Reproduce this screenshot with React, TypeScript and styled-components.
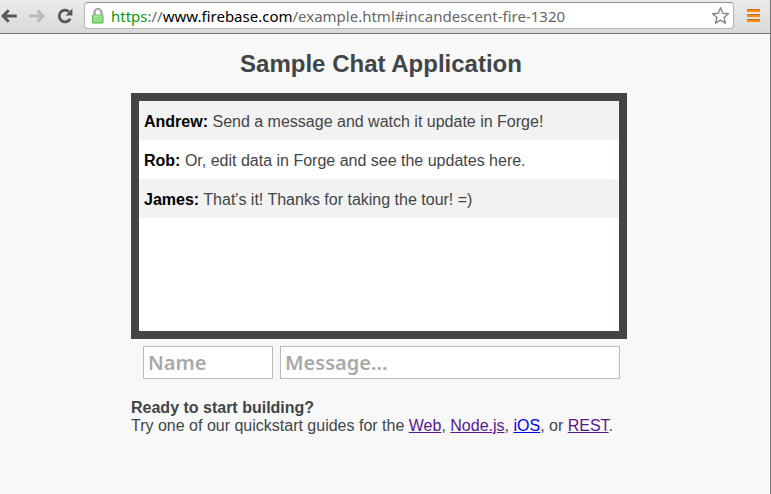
import React from "react";
import styled, { createGlobalStyle } from "styled-components";

const GlobalStyle = createGlobalStyle`
  * { box-sizing: border-box; }
  body {
    margin: 0;
    background: #f8f8f8;
    color: #424547;
    font: 16px/18px "Liberation Sans", Arial, sans-serif;
  }
`;

const Window = styled.div`
  min-height: 100vh;
  border-right: 1px solid #777;
`;

const Toolbar = styled.header`
  display: flex;
  align-items: center;
  height: 34px;
  padding: 0 8px 2px 0;
  border-bottom: 1px solid #777475;
  background: linear-gradient(#ebebeb, #dad9da);
`;

const Navigation = styled.nav`
  display: flex;
  flex: none;
  padding-right: 10px;
`;

const ToolButton = styled.button<{ $width: number }>`
  display: flex;
  flex: none;
  align-items: center;
  justify-content: center;
  width: ${(p) => p.$width}px;
  height: 28px;
  padding: 0;
  border: 0;
  background: none;
`;

const AddressBar = styled.div`
  display: flex;
  flex: 1;
  align-items: center;
  min-width: 0;
  height: 27px;
  padding: 0 3px 0 6px;
  margin-right: 10px;
  border: 1px solid #b4b4b4;
  border-top-color: #8e8e8e;
  border-radius: 4px;
  background: #fff;
`;

const Address = styled.div`
  flex: 1;
  min-width: 0;
  margin-left: 6px;
  overflow: hidden;
  white-space: nowrap;
  color: #666;
  font: 15px/24px "Noto Sans", sans-serif;
`;

const Secure = styled.span`
  color: #0a9a0a;
`;

const Host = styled.span`
  color: #000;
`;

const Page = styled.div`
  padding-right: 8px;
`;

const Main = styled.main`
  max-width: 500px;
  margin: 0 auto;
  padding: 16px 0;
`;

const Title = styled.h1`
  margin: 0 0 15px;
  text-align: center;
  font-size: 24px;
  line-height: 28px;
`;

const Messages = styled.ul`
  height: 246px;
  margin: 0 4px 7px 0;
  padding: 0;
  border: 8px solid #424547;
  background: #fff;
  overflow: auto;
  list-style: none;
`;

const Message = styled.li`
  padding: 12px 5px 9px;
  &:nth-child(odd) {
    background: #f2f2f2;
  }
`;

const Author = styled.strong`
  color: #000;
`;

const Composer = styled.form`
  display: flex;
  gap: 7px;
  margin: 0 11px 20px 12px;
`;

const Field = styled.input<{ $width?: number }>`
  flex: ${(p) => (p.$width ? `0 0 ${p.$width}px` : "1")};
  min-width: 0;
  height: 33px;
  padding: 0 4px;
  border: 1px solid #bbb;
  border-radius: 0;
  background: #fff;
  color: #424547;
  font: 600 20px/28px "Noto Sans", sans-serif;
  &::placeholder {
    color: #a9a9a9;
    opacity: 1;
  }
`;

const Guides = styled.p`
  margin: 0;
`;

const GuideLink = styled.a<{ $visited?: boolean }>`
  color: ${(p) => (p.$visited ? "#551a8b" : "#0000ee")};
`;

const messages = [
  { name: "Andrew", text: "Send a message and watch it update in Forge!" },
  { name: "Rob", text: "Or, edit data in Forge and see the updates here." },
  { name: "James", text: "That's it! Thanks for taking the tour! =)" },
];

const ArrowIcon = ({ color, flip }: { color: string; flip?: boolean }) => (
  <svg width="18" height="16" viewBox="0 0 18 16" fill="none" stroke={color} strokeWidth="2.8">
    <path d={flip ? "M1.2 8H14.5M9.3 2.2L15 8L9.3 13.8" : "M16.8 8H3.5M8.7 2.2L3 8L8.7 13.8"} />
  </svg>
);

const ReloadIcon = () => (
  <svg width="18" height="18" viewBox="0 0 18 18">
    <path d="M14.2 11.6A5.8 5.8 0 1 1 12.9 4.7" fill="none" stroke="#565656" strokeWidth="2.8" />
    <path d="M16.4 1.6V8.4H9.6Z" fill="#565656" />
  </svg>
);

const LockIcon = () => (
  <svg width="14" height="18" viewBox="0 0 14 18">
    <path d="M3.5 9V5.5A3.5 3.5 0 0 1 10.5 5.5V9" fill="none" stroke="#8b8b8b" strokeWidth="2.2" />
    <path d="M3.5 9V5.5A3.5 3.5 0 0 1 10.5 5.5V9" fill="none" stroke="#d4d4d4" strokeWidth="0.7" />
    <rect x="1.5" y="8" width="10.5" height="8" rx="0.5" fill="#91df85" stroke="#56ae49" />
    <path d="M2 9H11.5" stroke="#b9efb0" />
  </svg>
);

const StarIcon = () => (
  <svg width="20" height="20" viewBox="0 0 20 20">
    <path
      d="M10.5 1.8L12.8 7.2L18.4 7.7L14.1 11.5L15.5 17.2L10.5 14.2L5.5 17.2L6.9 11.5L2.6 7.7L8.2 7.2Z"
      fill="#fff"
      stroke="#858585"
      strokeWidth="1.4"
      strokeLinejoin="round"
    />
  </svg>
);

const MenuIcon = () => (
  <svg width="14" height="14" viewBox="0 0 14 14">
    {[0, 5, 10].map((y) => (
      <g key={y}>
        <rect x="1" y={y} width="13" height="3" fill="#f98b12" />
        <rect x="1" y={y} width="13" height="1" fill="#d06c15" />
      </g>
    ))}
  </svg>
);

export default function App() {
  return (
    <Window>
      <GlobalStyle />
      <Toolbar>
        <Navigation aria-label="History">
          <ToolButton $width={18} aria-label="Back">
            <ArrowIcon color="#565656" />
          </ToolButton>
          <ToolButton $width={38} aria-label="Forward" disabled>
            <ArrowIcon color="#b9b9b9" flip />
          </ToolButton>
          <ToolButton $width={18} aria-label="Reload">
            <ReloadIcon />
          </ToolButton>
        </Navigation>
        <AddressBar>
          <LockIcon />
          <Address role="textbox" aria-label="Address" tabIndex={0}>
            <Secure>https</Secure>://<Host>www.firebase.com</Host>/example.html#incandescent-fire-1320
          </Address>
          <ToolButton $width={20} aria-label="Bookmark">
            <StarIcon />
          </ToolButton>
        </AddressBar>
        <ToolButton $width={18} aria-label="Menu">
          <MenuIcon />
        </ToolButton>
      </Toolbar>
      <Page>
        <Main>
          <Title>Sample Chat Application</Title>
          <Messages>
            {messages.map((m) => (
              <Message key={m.name}>
                <Author>{m.name}:</Author> {m.text}
              </Message>
            ))}
          </Messages>
          <Composer onSubmit={(e) => e.preventDefault()}>
            <Field $width={130} placeholder="Name" aria-label="Name" />
            <Field placeholder="Message..." aria-label="Message" />
          </Composer>
          <Guides>
            <strong>Ready to start building?</strong>
            <br />
            Try one of our quickstart guides for the{" "}
            <GuideLink href="#web" $visited>Web</GuideLink>,{" "}
            <GuideLink href="#node" $visited>Node.js</GuideLink>,{" "}
            <GuideLink href="#ios">iOS</GuideLink>, or{" "}
            <GuideLink href="#rest" $visited>REST</GuideLink>.
          </Guides>
        </Main>
      </Page>
    </Window>
  );
}
